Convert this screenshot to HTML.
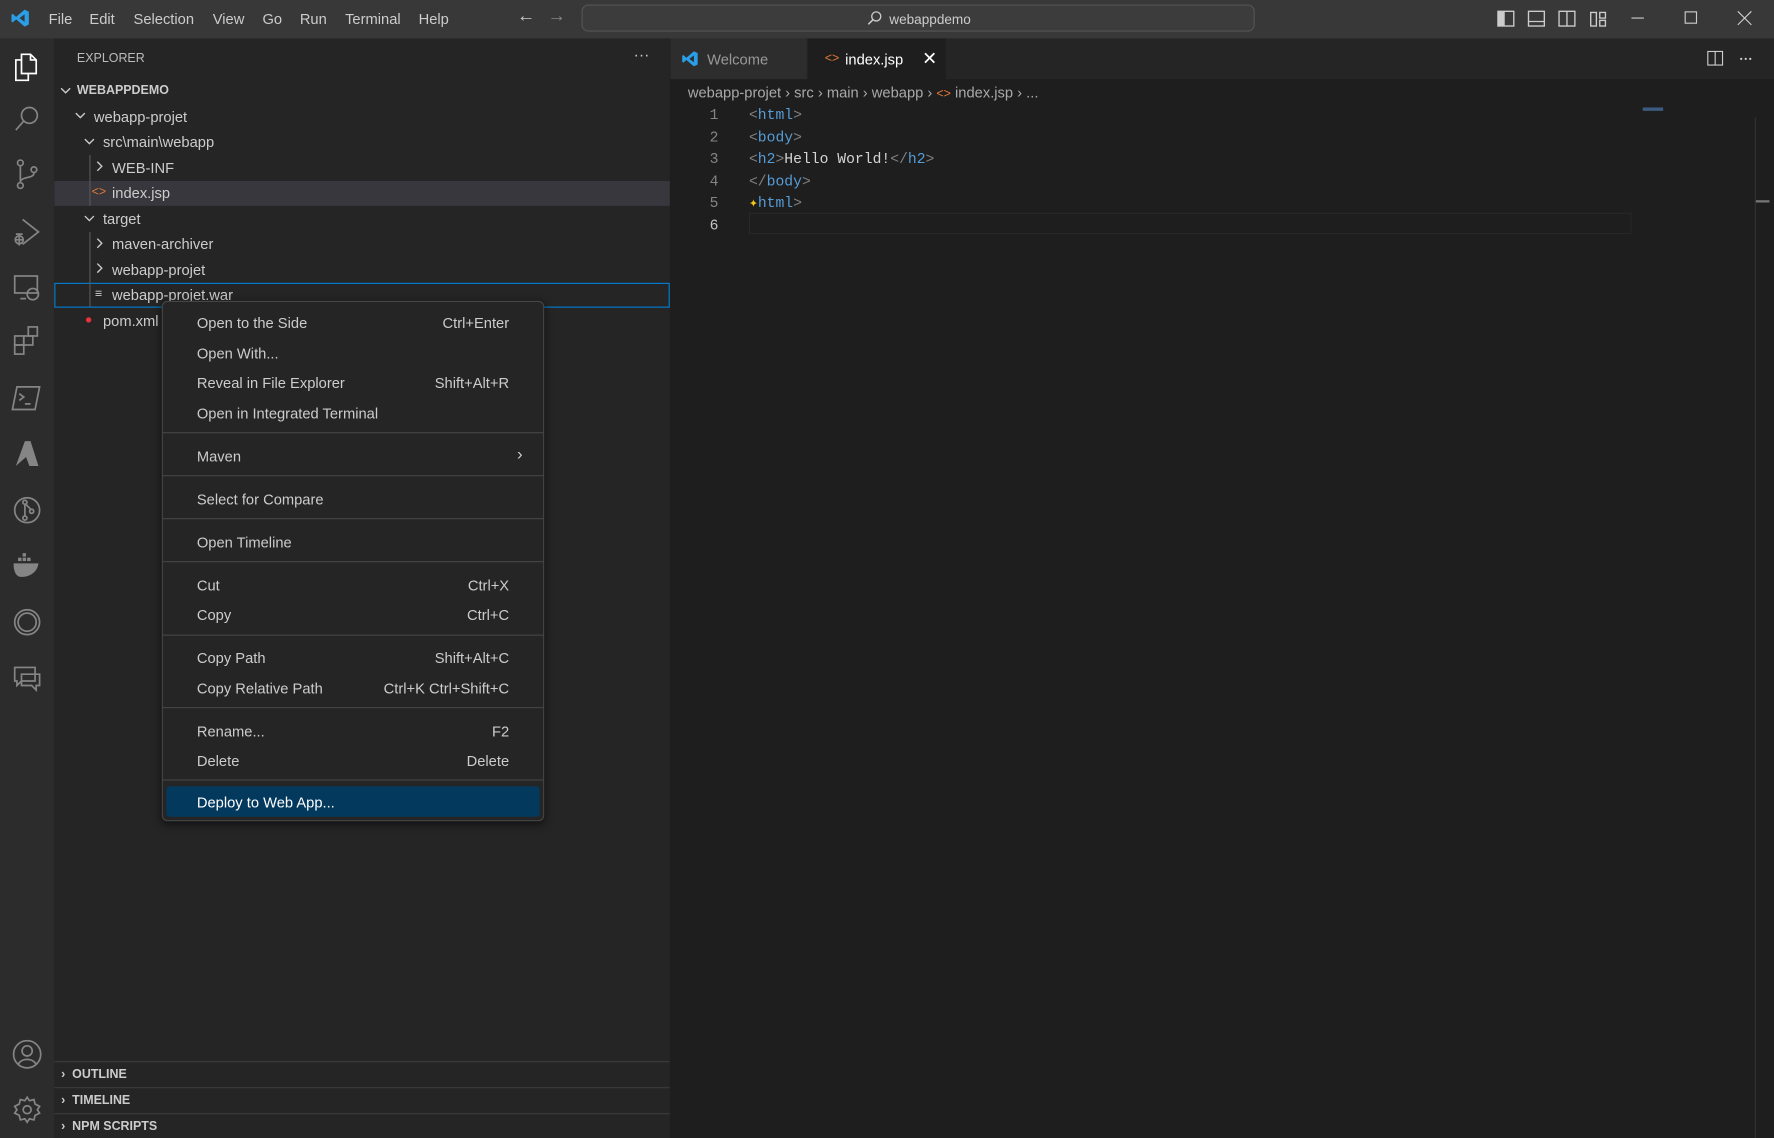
<!DOCTYPE html>
<html><head><meta charset="utf-8"><style>
html,body{margin:0;padding:0;width:1774px;height:1138px;overflow:hidden;background:#1e1e1e}
#w{position:absolute;left:0;top:0;width:1568px;height:1006px;transform:scale(1.13138,1.13121);transform-origin:0 0;font-family:"Liberation Sans",sans-serif;font-size:13px;color:#ccc;background:#1e1e1e}
.a{position:absolute;white-space:nowrap}
.mono{font-family:"Liberation Mono",monospace;font-size:13px}
.t{color:#569cd6}.g{color:#808080}
.mi{position:absolute;left:174px;color:#ccc}
.ms{position:absolute;right:30px;color:#ccc}
.sep{position:absolute;left:144px;width:337px;height:1px;background:#454545}
svg{position:absolute}
</style></head><body><div id="w">
<!-- title bar -->
<div class="a" style="left:0;top:0;width:1568px;height:34px;background:#383838"></div>
<svg style="left:9px;top:7px" width="18" height="18" viewBox="0 0 24 24"><path d="M17 2 L22 4.5 V19.5 L17 22 L7 13.5 L3 17 L1.5 16 V8 L3 7 L7 10.5 Z M17 7.5 L11 12 L17 16.5 Z" fill="#2a9fe8"/></svg>
<div class="a" style="left:43px;top:9px;color:#ccc">File</div>
<div class="a" style="left:79px;top:9px">Edit</div>
<div class="a" style="left:118px;top:9px">Selection</div>
<div class="a" style="left:188px;top:9px">View</div>
<div class="a" style="left:232px;top:9px">Go</div>
<div class="a" style="left:265px;top:9px">Run</div>
<div class="a" style="left:305px;top:9px">Terminal</div>
<div class="a" style="left:370px;top:9px">Help</div>
<div class="a" style="left:457px;top:6px;font-size:16px;color:#ccc">←</div>
<div class="a" style="left:484px;top:6px;font-size:16px;color:#888">→</div>
<div class="a" style="left:514px;top:4px;width:595px;height:24px;border:1px solid #555;border-radius:6px;background:#3c3c3c;box-sizing:border-box"></div>
<svg style="left:766px;top:9px" width="14" height="14" viewBox="0 0 14 14"><circle cx="8.5" cy="5.5" r="4" fill="none" stroke="#ccc" stroke-width="1.2"/><path d="M5.5 8.5 L1.5 12.5" stroke="#ccc" stroke-width="1.3"/></svg>
<div class="a" style="left:786px;top:10px;font-size:12px">webappdemo</div>
<svg style="left:1323px;top:9px" width="110" height="16" viewBox="0 0 110 16"><rect x="1" y="1" width="14" height="13" fill="none" stroke="#ccc" stroke-width="1.2"/><rect x="1" y="1" width="6" height="13" fill="#ccc"/><rect x="28" y="1" width="14" height="13" fill="none" stroke="#ccc" stroke-width="1.2"/><path d="M28 10 H42" stroke="#ccc" stroke-width="1.2"/><rect x="55" y="1" width="14" height="13" fill="none" stroke="#ccc" stroke-width="1.2"/><path d="M62 1 V14" stroke="#ccc" stroke-width="1.2"/><rect x="83" y="2" width="5" height="12" fill="none" stroke="#ccc" stroke-width="1.2"/><rect x="91" y="2" width="5" height="5" fill="none" stroke="#ccc" stroke-width="1.2"/><rect x="91" y="9" width="5" height="5" fill="none" stroke="#ccc" stroke-width="1.2"/></svg>
<svg style="left:1440px;top:9px" width="112" height="14" viewBox="0 0 112 14"><path d="M2 7 H13" stroke="#ccc"/><rect x="49.5" y="1.5" width="10" height="10" fill="none" stroke="#ccc"/><path d="M96 1 L108 13 M108 1 L96 13" stroke="#ccc"/></svg>
<!-- activity bar -->
<div class="a" style="left:0;top:34px;width:48px;height:972px;background:#2c2c2c"></div>
<svg style="left:10px;top:44px" width="28" height="580" viewBox="0 0 28 580" fill="none" stroke="#858585" stroke-width="1.5">
<g stroke="#fff"><path d="M9 4 H17 L22 9 V21 H9 Z M17 4 V9 H22"/><path d="M9 9 H4 V27 H15 V21"/></g>
<circle cx="16" cy="58" r="7"/><path d="M11 63 L4 71"/>
<circle cx="8" cy="100" r="2.5"/><circle cx="8" cy="120" r="2.5"/><circle cx="20" cy="106" r="2.5"/><path d="M8 103 V117 M20 109 C20 114 8 112 8 117"/>
<path d="M10 150 L24 161 L10 172 M3 168 h8 M4 163 h6 M7 165 v8"/><circle cx="7" cy="168" r="3.5"/>
<rect x="3" y="200" width="20" height="15"/><path d="M8 220 H13"/><circle cx="19" cy="216" r="5"/>
<rect x="3" y="253" width="8" height="8"/><rect x="11" y="253" width="8" height="8"/><rect x="3" y="261" width="8" height="8"/><rect x="15" y="245" width="8" height="8"/>
<path d="M5 298 H25 L21 318 H1 Z M7 304 L11 307 L7 310 M12 313 H17"/>
<path d="M4 368 L12 346 H17 L24 368 H16 L13 360 Z" fill="#858585" stroke="none"/>
<circle cx="14" cy="407" r="11"/><circle cx="12" cy="400" r="1.8"/><circle cx="12" cy="414" r="1.8"/><circle cx="18" cy="408" r="1.8"/><path d="M12 402 V412 M13 402 L17 406"/>
<path d="M2 454 H24 C23 462 16 466 9 466 C4 466 2 461 2 454Z" fill="#858585" stroke="none"/><rect x="6" y="449" width="3" height="3" fill="#858585" stroke="none"/><rect x="10" y="449" width="3" height="3" fill="#858585" stroke="none"/><rect x="14" y="449" width="3" height="3" fill="#858585" stroke="none"/><rect x="10" y="445" width="3" height="3" fill="#858585" stroke="none"/>
<circle cx="14" cy="506" r="11"/><circle cx="14" cy="506" r="8"/>
<path d="M3 546 H21 V558 H9 L5 562 V558 H3 Z M9 552 H25 V562 H22 V566 L18 562 H9Z"/>
</svg>
<svg style="left:10px;top:918px" width="28" height="78" viewBox="0 0 28 78" fill="none" stroke="#858585" stroke-width="1.5"><circle cx="14" cy="14" r="12"/><circle cx="14" cy="11" r="4.5"/><path d="M6 23 C9 17 19 17 22 23"/><circle cx="14" cy="63" r="3.5"/><path d="M14 52 L16 55 L20 54 L21 58 L25 60 L23 63 L25 66 L21 68 L20 72 L16 71 L14 74 L12 71 L8 72 L7 68 L3 66 L5 63 L3 60 L7 58 L8 54 L12 55 Z"/></svg>
<!-- sidebar -->
<div class="a" style="left:48px;top:34px;width:544px;height:972px;background:#252526"></div>
<div class="a" style="left:68px;top:46px;font-size:11px;color:#bbb">EXPLORER</div>
<div class="a" style="left:560px;top:40px;font-size:14px;color:#ccc">···</div>
<div class="a" style="left:48px;top:160px;width:544px;height:22px;background:#37373d"></div>
<div class="a" style="left:48px;top:250px;width:544px;height:22px;border:1px solid #007fd4;box-sizing:border-box"></div>
<div class="a" style="left:79px;top:137px;width:1px;height:45px;background:#585858"></div>
<div class="a" style="left:79px;top:205px;width:1px;height:66px;background:#585858"></div>
<svg style="left:52px;top:75px" width="40" height="130" viewBox="0 0 40 130" fill="none" stroke="#ccc" stroke-width="1.2"><path d="M2 3 L6 7 L10 3"/><path d="M15 25 L19 29 L23 25"/><path d="M23 48 L27 52 L31 48"/><path d="M23 116 L27 120 L31 116"/></svg>
<svg style="left:84px;top:142px" width="10" height="102" viewBox="0 0 10 102" fill="none" stroke="#ccc" stroke-width="1.2"><path d="M2 1 L6 5 L2 9"/><path d="M2 69 L6 73 L2 77"/><path d="M2 91 L6 95 L2 99"/></svg>
<div class="a" style="left:68px;top:74px;font-size:11px;font-weight:bold;color:#ccc">WEBAPPDEMO</div>
<div class="a" style="left:83px;top:96px">webapp-projet</div>
<div class="a" style="left:91px;top:118px">src\main\webapp</div>
<div class="a" style="left:99px;top:141px">WEB-INF</div>
<div class="a" style="left:81px;top:164px;color:#e37933;font-size:11px">&lt;&gt;</div><div class="a" style="left:99px;top:163px">index.jsp</div>
<div class="a" style="left:91px;top:186px">target</div>
<div class="a" style="left:99px;top:208px">maven-archiver</div>
<div class="a" style="left:99px;top:231px">webapp-projet</div>
<div class="a" style="left:84px;top:254px;font-size:11px">≡</div><div class="a" style="left:99px;top:253px">webapp-projet.war</div>
<div class="a" style="left:75px;top:277px;color:#e8313c;font-size:11px">●</div><div class="a" style="left:91px;top:276px">pom.xml</div>
<div class="a" style="left:48px;top:938px;width:544px;height:1px;background:#3c3c3c"></div>
<div class="a" style="left:48px;top:961px;width:544px;height:1px;background:#3c3c3c"></div>
<div class="a" style="left:48px;top:984px;width:544px;height:1px;background:#3c3c3c"></div>
<div class="a" style="left:54px;top:944px;font-size:11px;font-weight:bold">›&nbsp; OUTLINE</div>
<div class="a" style="left:54px;top:967px;font-size:11px;font-weight:bold">›&nbsp; TIMELINE</div>
<div class="a" style="left:54px;top:990px;font-size:11px;font-weight:bold">›&nbsp; NPM SCRIPTS</div>
<!-- tabs -->
<div class="a" style="left:592px;top:34px;width:976px;height:36px;background:#252526"></div>
<div class="a" style="left:593px;top:34px;width:120px;height:36px;background:#2d2d2d"></div>
<svg style="left:602px;top:44px" width="16" height="16" viewBox="0 0 24 24"><path d="M17 2 L22 4.5 V19.5 L17 22 L7 13.5 L3 17 L1.5 16 V8 L3 7 L7 10.5 Z M17 7.5 L11 12 L17 16.5 Z" fill="#2a9fe8"/></svg>
<div class="a" style="left:625px;top:45px;color:#999">Welcome</div>
<div class="a" style="left:714px;top:34px;width:122px;height:36px;background:#1e1e1e"></div>
<div class="a" style="left:729px;top:46px;color:#e37933;font-size:11px">&lt;&gt;</div>
<div class="a" style="left:747px;top:45px;color:#fff">index.jsp</div>
<div class="a" style="left:815px;top:42px;color:#fff;font-size:16px">✕</div>
<svg style="left:1508px;top:44px" width="48" height="16" viewBox="0 0 48 16"><rect x="1.5" y="1.5" width="13" height="12" fill="none" stroke="#ccc"/><path d="M8 1.5 V13.5" stroke="#ccc"/><circle cx="31" cy="8" r="1" fill="#ccc"/><circle cx="35" cy="8" r="1" fill="#ccc"/><circle cx="39" cy="8" r="1" fill="#ccc"/></svg>
<!-- breadcrumb -->
<div class="a" style="left:608px;top:74px;color:#a9a9a9">webapp-projet › src › main › webapp › <span style="color:#e37933;font-size:11px">&lt;&gt;</span> index.jsp › ...</div>
<!-- code -->
<div class="a" style="left:662px;top:188px;width:780px;height:19px;border:1px solid #282828;box-sizing:border-box"></div>
<div class="a mono" style="left:610px;top:92px;width:25px;text-align:right;line-height:19.5px;color:#858585">1<br>2<br>3<br>4<br>5<br><span style="color:#c6c6c6">6</span></div>
<div class="a mono" style="left:662px;top:92px;line-height:19.5px"><span class="g">&lt;</span><span class="t">html</span><span class="g">&gt;</span><br><span class="g">&lt;</span><span class="t">body</span><span class="g">&gt;</span><br><span class="g">&lt;</span><span class="t">h2</span><span class="g">&gt;</span><span style="color:#d4d4d4">Hello World!</span><span class="g">&lt;/</span><span class="t">h2</span><span class="g">&gt;</span><br><span class="g">&lt;/</span><span class="t">body</span><span class="g">&gt;</span><br><span style="color:#f5c518">✦</span><span class="t">html</span><span class="g">&gt;</span></div>
<div class="a" style="left:1452px;top:95px;width:18px;height:3px;background:#3d5a80"></div>
<div class="a" style="left:1551px;top:104px;width:1px;height:902px;background:#333"></div>
<div class="a" style="left:1552px;top:177px;width:12px;height:2px;background:#777"></div>
<!-- context menu -->
<div class="a" style="left:143px;top:266px;width:338px;height:460px;background:#252526;border:1px solid #454545;border-radius:5px;box-sizing:border-box;box-shadow:0 2px 8px rgba(0,0,0,.6)">
<div class="mi" style="left:30px;top:11px">Open to the Side</div><div class="ms" style="top:11px">Ctrl+Enter</div>
<div class="mi" style="left:30px;top:38px">Open With...</div>
<div class="mi" style="left:30px;top:64px">Reveal in File Explorer</div><div class="ms" style="top:64px">Shift+Alt+R</div>
<div class="mi" style="left:30px;top:91px">Open in Integrated Terminal</div>
<div class="mi" style="left:30px;top:129px">Maven</div><div class="ms" style="top:126px;right:18px;font-size:15px">›</div>
<div class="mi" style="left:30px;top:167px">Select for Compare</div>
<div class="mi" style="left:30px;top:205px">Open Timeline</div>
<div class="mi" style="left:30px;top:243px">Cut</div><div class="ms" style="top:243px">Ctrl+X</div>
<div class="mi" style="left:30px;top:269px">Copy</div><div class="ms" style="top:269px">Ctrl+C</div>
<div class="mi" style="left:30px;top:307px">Copy Path</div><div class="ms" style="top:307px">Shift+Alt+C</div>
<div class="mi" style="left:30px;top:334px">Copy Relative Path</div><div class="ms" style="top:334px">Ctrl+K Ctrl+Shift+C</div>
<div class="mi" style="left:30px;top:372px">Rename...</div><div class="ms" style="top:372px">F2</div>
<div class="mi" style="left:30px;top:398px">Delete</div><div class="ms" style="top:398px">Delete</div>
<div class="a" style="left:3px;top:428px;width:330px;height:27px;background:#04395e;border-radius:3px"></div>
<div class="mi" style="left:30px;top:435px;color:#fff">Deploy to Web App...</div>
</div>
<div class="sep" style="top:382px"></div><div class="sep" style="top:420px"></div><div class="sep" style="top:458px"></div><div class="sep" style="top:496px"></div><div class="sep" style="top:561px"></div><div class="sep" style="top:625px"></div><div class="sep" style="top:689px"></div>
</div></body></html>
